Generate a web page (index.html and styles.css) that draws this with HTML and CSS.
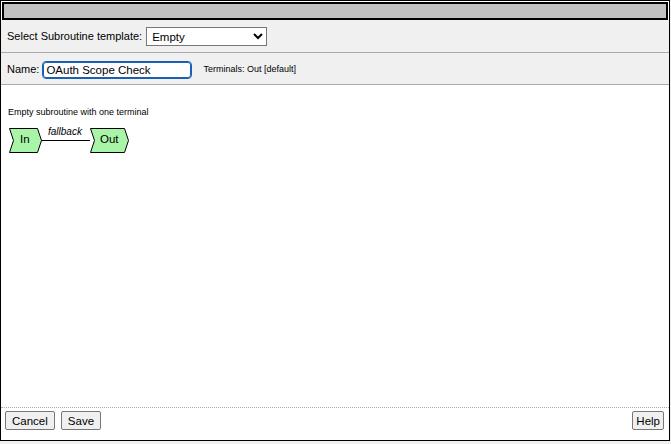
FILE: index.html
```html
<!DOCTYPE html>
<html>
<head>
    <title>New Subroutine</title>
    <link rel="stylesheet" href="styles.css">
</head>
<body>
    <div class="dialog">
        <div class="titlebar"></div>
        <div class="row">
            <label>Select Subroutine template:</label>
            <select class="template">
                <option>Empty</option>
            </select>
        </div>
        <div class="row row-name">
            <label>Name:</label>
            <input class="name" type="text" value="OAuth Scope Check">
            <span class="terminals">Terminals: Out [default]</span>
        </div>
        <div class="content">
            <div class="desc">Empty subroutine with one terminal</div>
            <div class="diagram">
                <svg width="130" height="30" viewBox="0 0 130 30">
                    <line x1="40" y1="12.5" x2="89" y2="12.5" stroke="#000" stroke-width="1"/>
                    <polygon points="8.5,0.5 36.5,0.5 40.5,12.5 36.5,24.5 8.5,24.5 12.5,12.5" fill="#a8f5a8" stroke="#000" stroke-width="1"/>
                    <polygon points="89.5,0.5 123.5,0.5 127.5,12.5 123.5,24.5 89.5,24.5 93.5,12.5" fill="#a8f5a8" stroke="#000" stroke-width="1"/>
                </svg>
                <span class="node-label in">In</span>
                <span class="node-label out">Out</span>
                <span class="edge-label">fallback</span>
            </div>
        </div>
        <div class="footer">
            <button class="btn">Cancel</button>
            <button class="btn">Save</button>
            <span class="spacer"></span>
            <button class="btn help">Help</button>
        </div>
    </div>
</body>
</html>
```

FILE: styles.css
```css
body {
    margin: 0;
    background: #f0f0f0;
    font-family: "Liberation Sans", Arial, sans-serif;
    font-size: 11px;
}
.dialog {
    width: 668px;
    height: 439px;
    border: 1px solid #000;
    background: #fff;
    display: flex;
    flex-direction: column;
}
.titlebar {
    margin: 1px 1px 0;
    height: 14px;
    border: 2px solid #000;
    background: #c0c0c0;
}
.row {
    height: 32px;
    flex: none;
    background: #f0f0f0;
    border-bottom: 1px solid #aaa;
    display: flex;
    align-items: center;
    padding-left: 6px;
}
.row-name {
    height: 31px;
}
.row label {
    margin-right: 4px;
    font-size: 11px;
}
.template {
    width: 121px;
    height: 19px;
    font-family: inherit;
    font-size: 11.5px;
    border: 1px solid #767676;
    border-radius: 0;
    background: #fff;
    padding: 0 1px;
    margin-top: 1px;
}
.name {
    width: 142px;
    height: 14px;
    font-family: inherit;
    font-size: 11.5px;
    padding: 0 2px;
    border: 1px solid #1a5fb4;
    border-radius: 3px;
    outline: 1px solid #1a5fb4;
    margin-left: 0;
    margin-top: 2px;
}
.terminals {
    font-size: 9px;
    margin-left: 12px;
}
.content {
    flex: 1;
    padding: 22px 7px 0;
}
.desc {
    font-size: 9px;
}
.diagram {
    position: relative;
    margin-top: 11px;
    margin-left: -7px;
    height: 30px;
}
.diagram svg {
    display: block;
}
.node-label {
    position: absolute;
    top: 5px;
    font-size: 11.5px;
}
.node-label.in {
    left: 19px;
}
.node-label.out {
    left: 99px;
}
.edge-label {
    position: absolute;
    top: -2px;
    left: 47px;
    font-size: 10px;
    font-style: italic;
}
.footer {
    border-top: 1px dotted #aaa;
    height: 29px;
    flex: none;
    display: flex;
    align-items: flex-start;
    padding: 3px 4px 0 4px;
}
.btn {
    font-family: inherit;
    font-size: 11.5px;
    height: 19px;
    padding: 0 6px;
    margin-right: 6px;
    background: #f0f0f0;
    border: 1px solid #777;
    border-radius: 2px;
}
.spacer {
    flex: 1;
}
.footer .help {
    margin-right: 1px;
    padding: 0 3px;
}
```
